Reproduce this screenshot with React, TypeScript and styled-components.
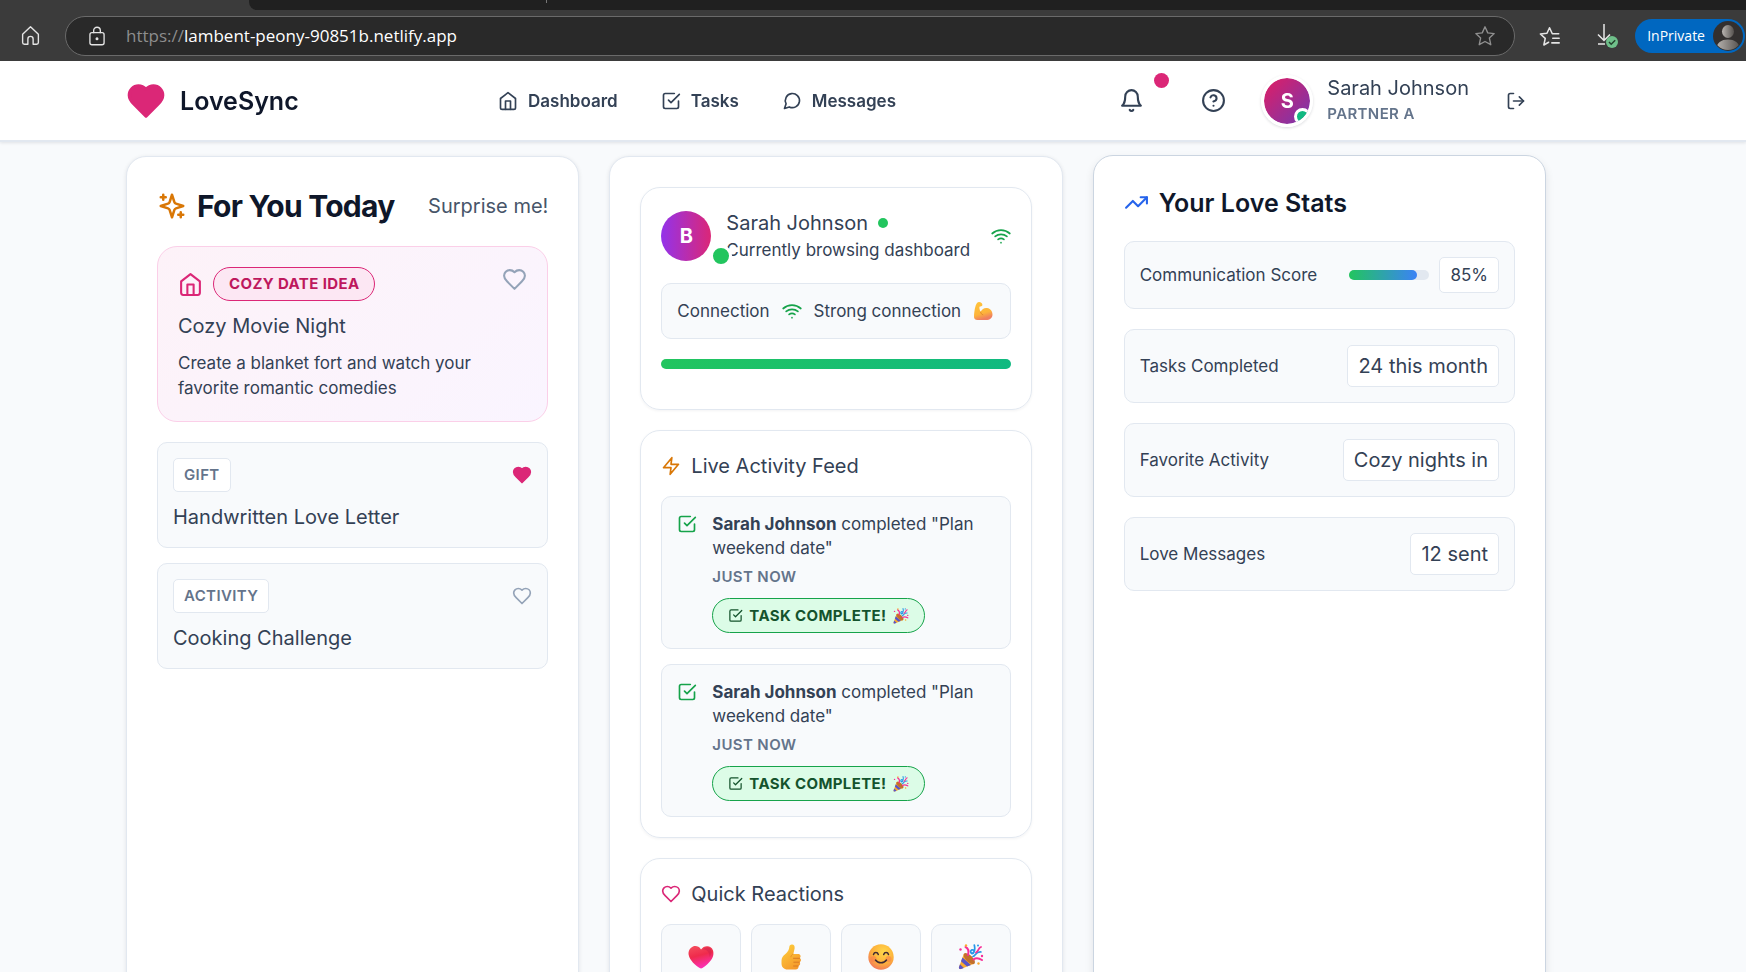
import React from "react";
import styled, { createGlobalStyle, css } from "styled-components";

const GlobalStyle = createGlobalStyle`
  *, *::before, *::after { box-sizing: border-box; }
  body { margin: 0; background: #f8fafc; color: #334155; font-family: Inter, "Liberation Sans", sans-serif; font-size: 20px; line-height: 30px; }
  h1, h2, h3, p, ul, dl, dd { margin: 0; padding: 0; font-weight: 400; font-size: inherit; }
  ul { list-style: none; }
  button { font: inherit; color: inherit; background: none; border: 0; padding: 0; cursor: pointer; }
  a { color: inherit; text-decoration: none; }
  svg { display: block; flex: none; }
`;

/* ---------- icons ---------- */

type IconProps = { size: number; color?: string; fill?: string; weight?: number };

const icon = (shape: React.ReactNode) =>
  function Icon({ size, color = "currentColor", fill = "none", weight = 2 }: IconProps) {
    return (
      <svg width={size} height={size} viewBox="0 0 24 24" fill={fill} stroke={color} strokeWidth={weight}
        strokeLinecap="round" strokeLinejoin="round" aria-hidden="true">
        {shape}
      </svg>
    );
  };

const HomeIcon = icon(<><path d="m3 9 9-7 9 7v11a2 2 0 0 1-2 2H5a2 2 0 0 1-2-2z" /><path d="M9 22V12h6v10" /></>);
const CheckSquareIcon = icon(<><path d="m9 11 3 3L22 4" /><path d="M21 12v7a2 2 0 0 1-2 2H5a2 2 0 0 1-2-2V5a2 2 0 0 1 2-2h11" /></>);
const MessageIcon = icon(<path d="m3 21 1.9-5.7a8.5 8.5 0 1 1 3.8 3.8z" />);
const BellIcon = icon(<><path d="M6 8a6 6 0 0 1 12 0c0 7 3 9 3 9H3s3-2 3-9" /><path d="M10.3 21a1.94 1.94 0 0 0 3.4 0" /></>);
const HelpIcon = icon(<><circle cx="12" cy="12" r="10" /><path d="M9.09 9a3 3 0 0 1 5.83 1c0 2-3 3-3 3" /><path d="M12 17h.01" /></>);
const LogoutIcon = icon(<><path d="M9 21H5a2 2 0 0 1-2-2V5a2 2 0 0 1 2-2h4" /><path d="m16 17 5-5-5-5" /><path d="M21 12H9" /></>);
const HeartIcon = icon(<path d="M19 14c1.49-1.46 3-3.21 3-5.5A5.5 5.5 0 0 0 16.5 3c-1.76 0-3 .5-4.5 2-1.5-1.5-2.74-2-4.5-2A5.5 5.5 0 0 0 2 8.5c0 2.3 1.5 4.05 3 5.5l7 7Z" />);
const SparklesIcon = icon(<><path d="m12 3-1.912 5.813a2 2 0 0 1-1.275 1.275L3 12l5.813 1.912a2 2 0 0 1 1.275 1.275L12 21l1.912-5.813a2 2 0 0 1 1.275-1.275L21 12l-5.813-1.912a2 2 0 0 1-1.275-1.275L12 3Z" /><path d="M5 3v4M19 17v4M3 5h4M17 19h4" /></>);
const ZapIcon = icon(<path d="M13 2 3 14h9l-1 8 10-12h-9l1-8z" />);
const TrendIcon = icon(<><path d="m22 7-8.500 8.500-5-5L2 17" /><path d="M16 7h6v6" /></>);
const WifiIcon = icon(<><path d="M5 12.550a11 11 0 0 1 14.080 0" /><path d="M1.420 9a16 16 0 0 1 21.160 0" /><path d="M8.530 16.110a6 6 0 0 1 6.950 0" /><path d="M12 20h.01" /></>);

const BrowserHomeIcon = icon(<path d="M3 10.500 12 2l9 8.500V20a2 2 0 0 1-2 2h-4v-6a3 3 0 0 0-6 0v6H5a2 2 0 0 1-2-2z" />);
const LockIcon = icon(<><rect x="3.500" y="8" width="17" height="14.500" rx="2.500" /><path d="M8 8V5.500a4 4 0 0 1 8 0V8" /><circle cx="12" cy="15.200" r="1" fill="currentColor" /></>);
const StarIcon = icon(<path d="m12 2 3 6.600 7 .8-5.200 4.800L18.300 21.500 12 18l-6.300 3.500 1.500-7.300L2 9.400l7-.8z" />);
const FavoritesIcon = icon(<><path d="M21.500 9.500h-7L11.500 3 8.700 9 1.500 9.800l5.300 4.800-1.500 7.200 5.200-3" /><path d="M15 14.500h7M14 19.500h8" /></>);

function DownloadIcon() {
  return (
    <svg width="24" height="28" viewBox="0 0 24 28" fill="none" aria-hidden="true">
      <path d="M9 2v16M3 12.500l6 6 6-6M3 22h7" stroke="#e8e8e8" strokeWidth="1.500" />
      <circle cx="17" cy="20" r="6" fill="#6fc08a" />
      <path d="m14 20 2.200 2.200 4-4" stroke="#23402c" strokeWidth="1.500" />
    </svg>
  );
}

function ProfilePicture() {
  return (
    <svg width="30" height="30" viewBox="0 0 30 30" aria-hidden="true">
      <defs>
        <linearGradient id="person"><stop offset="0" stopColor="#b9b5b1" /><stop offset="1" stopColor="#55514e" /></linearGradient>
        <clipPath id="disc"><circle cx="15" cy="15" r="14" /></clipPath>
      </defs>
      <circle cx="15" cy="15" r="15" fill="#33302f" />
      <g clipPath="url(#disc)" fill="url(#person)">
        <ellipse cx="15" cy="10.500" rx="6" ry="6.500" />
        <path d="M3 30c0-8 5-11.500 12-11.500S27 22 27 30z" />
      </g>
    </svg>
  );
}

/* ---------- emoji drawings ---------- */

function HeartEmoji() {
  return (
    <svg width="26" height="26" viewBox="0 0 26 26" role="img" aria-label="Love">
      <defs>
        <linearGradient id="loveRed" x2=".3" y2="1"><stop offset="0" stopColor="#f5515f" /><stop offset=".5" stopColor="#ef2b4c" /><stop offset="1" stopColor="#fb2fb0" /></linearGradient>
      </defs>
      <path d="M13 5.500C11 2 7.500 1.500 5 2.500 1.500 4 0 7.500.7 11c1 5.500 7 10.500 11 13 .9.600 1.800.600 2.700 0 4-2.600 10-7.600 10.900-13C26 7 24.400 3.600 21 2.500c-3-1-6 0-8 3z" fill="url(#loveRed)" />
      <path d="M15 5.500c1.800-2.500 5-3 7-1.300 2.500 2.200 1.600 6-.5 8.800 0-5-2.500-7.500-6.500-7.500z" fill="#c81b4a" opacity=".4" />
    </svg>
  );
}

function ThumbEmoji() {
  return (
    <svg width="26" height="26" viewBox="0 0 26 26" role="img" aria-label="Thumbs up">
      <defs><linearGradient id="thumb" x2=".6" y2="1"><stop offset="0" stopColor="#ffd23c" /><stop offset="1" stopColor="#f59a2c" /></linearGradient></defs>
      <path d="M13 .8c2.300-.8 4 .7 3.600 3.700-.3 2-.9 3.700-1.300 5.500h4.900c2.300 0 3.200 2.700 1.600 4 1.700 1.200 1.500 3.400-.1 4.200 1 1.500.3 3.200-1.200 3.700.4 1.900-.8 3.600-3 3.600H9.500C6 25.500 3.500 23 3.500 19.500v-2.700c0-3 1.500-4.800 3.600-6.600C10.500 7.300 11 5.500 11.300 3c.1-1.100.6-1.800 1.700-2.200z" fill="url(#thumb)" />
      <path d="M15.500 14.300h6M15.800 18.200h5.500M15.600 22h4.500" stroke="#d87b23" strokeWidth="1" strokeLinecap="round" />
      <path d="M15.300 10c-1.500.7-2.300 1.700-2.500 3.200" stroke="#e5922a" strokeWidth="1" fill="none" />
    </svg>
  );
}

function SmileEmoji() {
  return (
    <svg width="26" height="26" viewBox="0 0 26 26" role="img" aria-label="Smile">
      <defs><radialGradient id="face" cx=".6" cy=".3" r=".75"><stop offset="0" stopColor="#ffd84a" /><stop offset=".6" stopColor="#fdb03c" /><stop offset="1" stopColor="#f0745a" /></radialGradient></defs>
      <circle cx="13" cy="13" r="12.700" fill="url(#face)" />
      <circle cx="5.500" cy="15" r="3" fill="#f9704f" opacity=".45" />
      <circle cx="20.500" cy="15" r="3" fill="#f9704f" opacity=".45" />
      <path d="M5.500 10.500c.8-2.600 4-2.600 4.800 0M15.700 10.500c.8-2.600 4-2.600 4.800 0M7.500 16c2.500 3.700 8.500 3.700 11 0" stroke="#402a32" strokeWidth="1.500" fill="none" strokeLinecap="round" />
    </svg>
  );
}

function PartyEmoji({ size }: { size: number }) {
  return (
    <svg width={size} height={size} viewBox="0 0 26 26" role="img" aria-label="Celebrate">
      <path d="M6 9.500 1 23c-.5 1.500.6 2.500 2 2l13.500-5.500z" fill="#fbaa2f" />
      <path d="m4.500 13.500 8.500 7.400-4 1.600-6-5.200zM2 20.300 5.800 24 3 25c-1.500.4-2.400-.5-2-2z" fill="#5a55c8" />
      <ellipse cx="11.300" cy="14.600" rx="3.300" ry="7.200" transform="rotate(-46 11.300 14.600)" fill="#c2702c" />
      <path d="M7.500 3c3 1.500 3.500 4.500 2.500 8M15.500 15.500c2.500-2 5-1.700 8.500.5" stroke="#f72f97" strokeWidth="2" fill="none" strokeLinecap="round" />
      <path d="M13.500 9.500c-2-2.500 0-4 1.500-3.500 2 .8 1 4-1.500 3.500zm0 0C17 8.500 17 4 16.300 1M15 12.500c2.500-.5 2.500-5 8-4.500" stroke="#2596e8" strokeWidth="1.700" fill="none" strokeLinecap="round" />
      <path d="M18 8.500c3-1.500 2-4.500 5-5.500" stroke="#f72f97" strokeWidth="1.800" fill="none" strokeLinecap="round" />
      <circle cx="2.500" cy="5.500" r="1.200" fill="#f72f97" /><circle cx="8" cy="1.500" r="1.200" fill="#fbaa2f" />
      <circle cx="20.500" cy="19.500" r="1.200" fill="#fbaa2f" /><circle cx="24" cy="12" r="1.200" fill="#f72f97" />
      <circle cx="20" cy="1.500" r="1" fill="#2596e8" />
    </svg>
  );
}

function MuscleEmoji() {
  return (
    <svg width="20" height="20" viewBox="0 0 20 20" role="img" aria-label="Strong">
      <defs><linearGradient id="arm" x2=".3" y2="1"><stop offset="0" stopColor="#ffc43a" /><stop offset=".7" stopColor="#fdb43a" /><stop offset="1" stopColor="#ef7f61" /></linearGradient></defs>
      <path d="M4 2C5 .8 7 .8 8.200 1.700c1.300 1 1.600 2.700.6 3.400-.9.600-1.800 0-2.300.6-.4.800.2 3.300 1.100 5.100C9 8 11.500 6.500 14 7c3.500.6 5.500 3.500 5.500 6.500 0 3.500-2.500 5.500-6.500 5.500H4.500C2 19 .8 17.500 1 15 1.300 10.500 2 4.800 4 2z" fill="url(#arm)" />
      <path d="M7.600 10.800c.1 1.500 1 2.600 2.600 3" stroke="#df8a2c" strokeWidth="1" fill="none" />
    </svg>
  );
}

/* ---------- browser frame ---------- */

const Shell = styled.div`
  height: 100vh;
  display: flex;
  flex-direction: column;
`;

const BrowserChrome = styled.div`
  flex: none;
  background: #3b3b3b;
`;

const TabStrip = styled.div`
  height: 10px;
  margin-left: 249px;
  padding-left: 297px;
  background: #202020;
  border-bottom-left-radius: 8px;
`;

const TabDivider = styled.div`
  width: 1px;
  height: 3px;
  background: #777;
`;

const Toolbar = styled.div`
  height: 51px;
  display: flex;
  align-items: center;
  color: #e4e4e4;
  padding: 0 1px 0 20px;
`;

const AddressBar = styled.div`
  flex: 1;
  height: 40px;
  margin: 0 24px;
  padding: 0 18px 0 21px;
  display: flex;
  align-items: center;
  gap: 19px;
  background: #292929;
  border: 1px solid #6a6a6a;
  border-radius: 20px;
`;

const Address = styled.div`
  flex: 1;
  font-family: "Open Sans", "Noto Sans", sans-serif;
  font-size: 17px;
  line-height: 24px;
  color: #fff;
`;

const Scheme = styled.span`
  color: #8d8d8d;
`;

const ToolbarActions = styled.div`
  display: flex;
  align-items: center;
  gap: 34px;
`;

const MutedButton = styled.button`
  color: #8f8f8f;
`;

const PrivateBadge = styled.button`
  height: 34px;
  margin-left: -18px;
  padding: 0 2px 0 12px;
  display: flex;
  align-items: center;
  gap: 8px;
  border-radius: 17px;
  background: #0067c0;
  color: #fff;
  font-family: "Open Sans", "Noto Sans", sans-serif;
  font-size: 14px;
`;

/* ---------- site header ---------- */

const Page = styled.div`
  flex: 1;
  min-height: 0;
  overflow: auto;
  scrollbar-width: none;
`;

const SiteHeader = styled.header`
  position: sticky;
  top: 0;
  z-index: 5;
  height: 81px;
  padding: 0 200px 0 126px;
  display: flex;
  align-items: center;
  justify-content: space-between;
  background: #fff;
  border-bottom: 2px solid #e2e8f0;
  box-shadow: 0 1px 3px rgba(15, 23, 42, 0.1);
`;

const Brand = styled.a`
  display: flex;
  align-items: center;
  gap: 14px;
  color: #0f172a;
  font-size: 25px;
  font-weight: 600;
`;

const Nav = styled.nav`
  display: flex;
  gap: 43px;
  margin-right: 8px;
`;

const NavLink = styled.a`
  display: flex;
  align-items: center;
  gap: 10px;
  font-size: 17px;
  font-weight: 600;
`;

const HeaderTools = styled.div`
  display: flex;
  align-items: center;
`;

const ToolButtons = styled.div`
  display: flex;
  gap: 26px;
`;

const IconButton = styled.button<{ $size: number }>`
  position: relative;
  width: ${(p) => p.$size}px;
  height: ${(p) => p.$size}px;
  display: grid;
  place-items: center;
`;

const Notice = styled.span`
  position: absolute;
  top: 0;
  right: -10px;
  width: 15px;
  height: 15px;
  border-radius: 50%;
  background: #db2777;
`;

const Account = styled.div`
  display: flex;
  align-items: center;
  gap: 14px;
  margin: 0 17px 0 20px;
`;

const HeaderAvatar = styled.div`
  position: relative;
  width: 52px;
  height: 52px;
  display: grid;
  place-items: center;
  border: 3px solid #fff;
  border-radius: 50%;
  background: linear-gradient(135deg, #e11d64, #7438b0) padding-box;
  box-shadow: 0 1px 3px rgba(15, 23, 42, 0.15);
  color: #fff;
  font-weight: 700;
  overflow: hidden;
`;

const AvatarPresence = styled.span`
  position: absolute;
  right: -1px;
  bottom: -1px;
  width: 17px;
  height: 17px;
  border: 3px solid #fff;
  border-radius: 50%;
  background: #10b981;
`;

const AccountName = styled.div`
  line-height: 26px;
`;

const Overline = styled.div<{ $lineHeight: number }>`
  font-size: 15px;
  font-weight: 600;
  line-height: ${(p) => p.$lineHeight}px;
  letter-spacing: 0.025em;
  text-transform: uppercase;
  color: #64748b;
`;

/* ---------- columns ---------- */

const Columns = styled.main`
  display: grid;
  grid-template-columns: repeat(3, minmax(0, 1fr));
  gap: 30px;
  padding: 14px 200px 30px 126px;
`;

const Column = styled.section<{ $raised?: boolean }>`
  padding: 30px;
  background: #fff;
  border: 1px solid #e2e8f0;
  border-radius: 20px;
  box-shadow: 0 1px 4px rgba(15, 23, 42, 0.1);
  ${(p) =>
    p.$raised &&
    css`
      margin-top: -1px;
      border-color: #cbd5e1;
      box-shadow: 0 4px 8px rgba(15, 23, 42, 0.1);
    `}
`;

const ColumnHead = styled.div`
  height: 37px;
  display: flex;
  align-items: center;
  justify-content: space-between;
  margin-bottom: 22px;
`;

const ForYouTitle = styled.h1`
  display: flex;
  align-items: center;
  gap: 10px;
  color: #0f172a;
  font-size: 30px;
  font-weight: 700;
  letter-spacing: -0.025em;
`;

const TextButton = styled.button`
  color: #475569;
`;

const Featured = styled.article`
  display: flex;
  flex-direction: column;
  gap: 10px;
  padding: 20px;
  margin-bottom: 20px;
  border: 1px solid #fbcfe8;
  border-radius: 20px;
  background: linear-gradient(135deg, #fdf2f8, #faf5ff);
`;

const Row = styled.div<{ $top?: boolean }>`
  display: flex;
  align-items: ${(p) => (p.$top ? "flex-start" : "center")};
  justify-content: space-between;
`;

const TopicGroup = styled.div`
  display: flex;
  align-items: center;
  gap: 10px;
`;

const Pill = styled.span<{ $tone: "pink" | "green" }>`
  height: ${(p) => (p.$tone === "pink" ? 34 : 35)}px;
  display: inline-flex;
  align-items: center;
  gap: 6px;
  padding: 0 15px;
  border: 1px solid;
  border-radius: 18px;
  font-size: 15px;
  font-weight: 700;
  letter-spacing: 0.025em;
  text-transform: uppercase;
  ${(p) =>
    p.$tone === "pink"
      ? css`background: #fce7f3; border-color: #db2777; color: #be185d;`
      : css`background: #dcfce7; border-color: #16a34a; color: #14532d;`}
`;

const Body = styled.p<{ $lineHeight?: number }>`
  font-size: 17px;
  line-height: ${(p) => p.$lineHeight ?? 25}px;
`;

const Stack = styled.ul`
  display: flex;
  flex-direction: column;
  gap: 15px;
`;

const Idea = styled.li`
  display: flex;
  flex-direction: column;
  gap: 10px;
  padding: 15px;
  border: 1px solid #e2e8f0;
  border-radius: 10px;
  background: #f8fafc;
`;

const Tag = styled.span`
  height: 34px;
  padding: 0 10px;
  display: inline-flex;
  align-items: center;
  border: 1px solid #e2e8f0;
  border-radius: 5px;
  background: #fff;
`;

const Card = styled.section`
  padding: 20px;
  margin-bottom: 20px;
  border: 1px solid #e2e8f0;
  border-radius: 20px;
  box-shadow: 0 1px 3px rgba(15, 23, 42, 0.05);
`;

const Partner = styled.div`
  display: flex;
  align-items: center;
  gap: 15px;
`;

const PartnerAvatar = styled.div`
  position: relative;
  width: 50px;
  height: 50px;
  display: grid;
  place-items: center;
  border-radius: 50%;
  background: linear-gradient(90deg, #9333ea, #db2777);
  color: #fff;
  font-weight: 700;
`;

const PartnerPresence = styled.span`
  position: absolute;
  right: -21px;
  bottom: -6px;
  width: 22px;
  height: 22px;
  border: 3px solid #fff;
  border-radius: 50%;
  background: #22c55e;
`;

const PartnerName = styled.div`
  display: flex;
  align-items: center;
  gap: 10px;
`;

const OnlineDot = styled.span`
  width: 10px;
  height: 10px;
  border-radius: 50%;
  background: #22c55e;
`;

const Connection = styled.div`
  height: 56px;
  margin: 20px 0;
  padding: 0 15px;
  display: flex;
  align-items: center;
  gap: 12px;
  border: 1px solid #e2e8f0;
  border-radius: 10px;
  background: #f8fafc;
`;

const Strength = styled.div`
  height: 10px;
  margin-bottom: 20px;
  border-radius: 5px;
  background: linear-gradient(135deg, #22c55e, #10b981);
`;

const CardTitle = styled.h2`
  display: flex;
  align-items: center;
  gap: 10px;
  margin-bottom: 15px;
`;

const Activity = styled.li`
  display: flex;
  align-items: flex-start;
  gap: 15px;
  padding: 15px;
  border: 1px solid #e2e8f0;
  border-radius: 10px;
  background: #f8fafc;
  & > svg { margin-top: 2px; }
`;

const ActivityText = styled.div`
  display: flex;
  flex-direction: column;
  align-items: flex-start;
  gap: 5px;
  & > ${Pill} { margin-top: 5px; }
`;

const Reactions = styled.div`
  display: grid;
  grid-template-columns: repeat(4, 1fr);
  gap: 10px;
`;

const Reaction = styled.button`
  height: 66px;
  display: grid;
  place-items: center;
  border: 1px solid #e2e8f0;
  border-radius: 10px;
  background: #f8fafc;
`;

const StatsTitle = styled.h2`
  height: 33px;
  display: flex;
  align-items: center;
  gap: 10px;
  margin-bottom: 22px;
  color: #0f172a;
  font-size: 25px;
  font-weight: 600;
`;

const Stats = styled.dl`
  margin: 0;
  display: flex;
  flex-direction: column;
  gap: 20px;
`;

const Stat = styled.div`
  display: flex;
  align-items: center;
  justify-content: space-between;
  padding: 15px;
  border: 1px solid #e2e8f0;
  border-radius: 10px;
  background: #f8fafc;
`;

const StatLabel = styled.dt`
  font-size: 17px;
`;

const StatValue = styled.dd`
  display: flex;
  align-items: center;
  gap: 10px;
`;

const ValueBox = styled.span<{ $small?: boolean }>`
  padding: ${(p) => (p.$small ? 4 : 5)}px 10px;
  border: 1px solid #e2e8f0;
  border-radius: 5px;
  background: #fff;
  font-size: ${(p) => (p.$small ? 17 : 20)}px;
  line-height: ${(p) => (p.$small ? 26 : 30)}px;
`;

const Meter = styled.div`
  width: 80px;
  height: 10px;
  border-radius: 5px;
  background: #e2e8f0;
`;

const MeterFill = styled.div`
  height: 100%;
  border-radius: 5px;
  background: linear-gradient(90deg, #22c55e, #3b82f6);
`;

const ideas = [
  { tag: "Gift", title: "Handwritten Love Letter", liked: true },
  { tag: "Activity", title: "Cooking Challenge", liked: false },
];

const stats = [
  { label: "Communication Score", value: "85%", score: 85 },
  { label: "Tasks Completed", value: "24 this month" },
  { label: "Favorite Activity", value: "Cozy nights in" },
  { label: "Love Messages", value: "12 sent" },
];

const activities = [1, 2];

export default function App() {
  return (
    <Shell>
      <GlobalStyle />
      <BrowserChrome>
        <TabStrip><TabDivider /></TabStrip>
        <Toolbar>
          <button aria-label="Home"><BrowserHomeIcon size={21} weight={1.6} /></button>
          <AddressBar>
            <LockIcon size={20} weight={1.6} />
            <Address><Scheme>https://</Scheme>lambent-peony-90851b.netlify.app</Address>
            <MutedButton aria-label="Add to favorites"><StarIcon size={22} weight={1.5} /></MutedButton>
          </AddressBar>
          <ToolbarActions>
            <button aria-label="Favorites"><FavoritesIcon size={22} weight={1.7} /></button>
            <button aria-label="Downloads"><DownloadIcon /></button>
            <PrivateBadge>InPrivate<ProfilePicture /></PrivateBadge>
          </ToolbarActions>
        </Toolbar>
      </BrowserChrome>

      <Page>
        <SiteHeader>
          <Brand href="#home"><HeartIcon size={40} color="#db2777" fill="#db2777" weight={2} />LoveSync</Brand>
          <Nav>
            <NavLink href="#dashboard"><HomeIcon size={20} />Dashboard</NavLink>
            <NavLink href="#tasks"><CheckSquareIcon size={20} />Tasks</NavLink>
            <NavLink href="#messages"><MessageIcon size={20} />Messages</NavLink>
          </Nav>
          <HeaderTools>
            <ToolButtons>
              <IconButton $size={56} aria-label="Notifications"><BellIcon size={25} /><Notice /></IconButton>
              <IconButton $size={56} aria-label="Help"><HelpIcon size={25} /></IconButton>
            </ToolButtons>
            <Account>
              <HeaderAvatar>S<AvatarPresence /></HeaderAvatar>
              <div>
                <AccountName>Sarah Johnson</AccountName>
                <Overline $lineHeight={25}>Partner A</Overline>
              </div>
            </Account>
            <IconButton $size={60} aria-label="Log out"><LogoutIcon size={20} /></IconButton>
          </HeaderTools>
        </SiteHeader>

        <Columns>
          <Column>
            <ColumnHead>
              <ForYouTitle><SparklesIcon size={30} color="#d97706" />For You Today</ForYouTitle>
              <TextButton>Surprise me!</TextButton>
            </ColumnHead>
            <Featured>
              <Row $top>
                <TopicGroup>
                  <HomeIcon size={25} color="#db2777" />
                  <Pill $tone="pink">Cozy Date Idea</Pill>
                </TopicGroup>
                <button aria-label="Like Cozy Movie Night"><HeartIcon size={25} color="#94a3b8" /></button>
              </Row>
              <h3>Cozy Movie Night</h3>
              <Body>Create a blanket fort and watch your favorite romantic comedies</Body>
            </Featured>
            <Stack>
              {ideas.map((idea) => (
                <Idea key={idea.tag}>
                  <Row>
                    <Tag><Overline as="span" $lineHeight={24}>{idea.tag}</Overline></Tag>
                    <button aria-label={`Like ${idea.title}`}>
                      <HeartIcon size={20} color={idea.liked ? "#db2777" : "#94a3b8"} fill={idea.liked ? "#db2777" : "none"} />
                    </button>
                  </Row>
                  <h3>{idea.title}</h3>
                </Idea>
              ))}
            </Stack>
          </Column>

          <Column>
            <Card>
              <Row>
                <Partner>
                  <PartnerAvatar>B<PartnerPresence /></PartnerAvatar>
                  <div>
                    <PartnerName>Sarah Johnson<OnlineDot /></PartnerName>
                    <Body>Currently browsing dashboard</Body>
                  </div>
                </Partner>
                <WifiIcon size={20} color="#16a34a" />
              </Row>
              <Connection>
                <Body>Connection</Body>
                <WifiIcon size={20} color="#16a34a" />
                <Body>Strong connection</Body>
                <MuscleEmoji />
              </Connection>
              <Strength />
            </Card>

            <Card>
              <CardTitle><ZapIcon size={20} color="#d97706" />Live Activity Feed</CardTitle>
              <Stack>
                {activities.map((id) => (
                  <Activity key={id}>
                    <CheckSquareIcon size={20} color="#16a34a" />
                    <ActivityText>
                      <Body $lineHeight={24}><strong>Sarah Johnson</strong> completed "Plan weekend date"</Body>
                      <Overline $lineHeight={23}>Just now</Overline>
                      <Pill $tone="green"><CheckSquareIcon size={15} />Task Complete!<PartyEmoji size={16} /></Pill>
                    </ActivityText>
                  </Activity>
                ))}
              </Stack>
            </Card>

            <Card>
              <CardTitle><HeartIcon size={20} color="#db2777" />Quick Reactions</CardTitle>
              <Reactions>
                <Reaction aria-label="Love"><HeartEmoji /></Reaction>
                <Reaction aria-label="Thumbs up"><ThumbEmoji /></Reaction>
                <Reaction aria-label="Smile"><SmileEmoji /></Reaction>
                <Reaction aria-label="Celebrate"><PartyEmoji size={26} /></Reaction>
              </Reactions>
            </Card>
          </Column>

          <Column $raised>
            <StatsTitle><TrendIcon size={25} color="#2563eb" />Your Love Stats</StatsTitle>
            <Stats>
              {stats.map((stat) => (
                <Stat key={stat.label}>
                  <StatLabel>{stat.label}</StatLabel>
                  <StatValue>
                    {stat.score && <Meter><MeterFill style={{ width: `${stat.score}%` }} /></Meter>}
                    <ValueBox $small={Boolean(stat.score)}>{stat.value}</ValueBox>
                  </StatValue>
                </Stat>
              ))}
            </Stats>
          </Column>
        </Columns>
      </Page>
    </Shell>
  );
}
